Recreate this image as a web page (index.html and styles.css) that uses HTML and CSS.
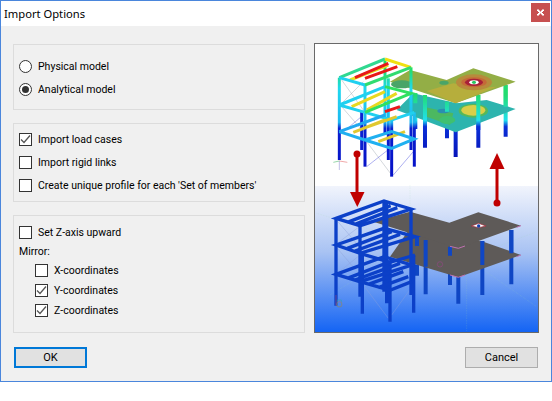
FILE: index.html
```html
<!DOCTYPE html>
<html lang="en">
<head>
  <meta charset="UTF-8">
  <title>Import Options</title>
  <link rel="stylesheet" href="styles.css">
</head>
<body>
  <div class="dialog">
    <div class="titlebar">
      <span class="title">Import Options</span>
      <button class="close-btn"><svg width="9" height="9" viewBox="0 0 9 9"><path d="M1 1.500h2v1h1v1h1v-1h1v-1h2v1.500h-1v1h-1v1h1v1h1v1.500h-2v-1h-1v-1h-1v1h-1v1h-2v-1.500h1v-1h1v-1h-1v-1h-1z" fill="#fff"/></svg></button>
    </div>
    <div class="content">
      <div class="options">
        <div class="group group-model">
          <label class="row"><span class="radio"></span>Physical model</label>
          <label class="row"><span class="radio checked"></span>Analytical model</label>
        </div>
        <div class="group group-import">
          <label class="row"><span class="check checked"><svg width="11" height="11" viewBox="0 0 11 11"><path d="M1 5.500l3 3 6-7" fill="none" stroke="#555" stroke-width="1.300"/></svg></span>Import load cases</label>
          <label class="row"><span class="check"></span>Import rigid links</label>
          <label class="row"><span class="check"></span>Create unique profile for each 'Set of members'</label>
        </div>
        <div class="group group-axis">
          <label class="row"><span class="check"></span>Set Z-axis upward</label>
          <div class="mirror-label">Mirror:</div>
          <label class="row sub"><span class="check"></span>X-coordinates</label>
          <label class="row sub"><span class="check checked"><svg width="11" height="11" viewBox="0 0 11 11"><path d="M1 5.500l3 3 6-7" fill="none" stroke="#555" stroke-width="1.300"/></svg></span>Y-coordinates</label>
          <label class="row sub"><span class="check checked"><svg width="11" height="11" viewBox="0 0 11 11"><path d="M1 5.500l3 3 6-7" fill="none" stroke="#555" stroke-width="1.300"/></svg></span>Z-coordinates</label>
        </div>
      </div>

      <div class="preview">
        <svg class="preview-art" width="223" height="288" viewBox="315 44 223 288">
          <defs>
            <linearGradient id="sky" x1="0" y1="0" x2="0" y2="1">
              <stop offset="0" stop-color="#f1f4fc"/>
              <stop offset="0.45" stop-color="#a9c3f3"/>
              <stop offset="1" stop-color="#1464f4"/>
            </linearGradient>
            <linearGradient id="col" gradientUnits="userSpaceOnUse" x1="0" y1="100" x2="0" y2="400">
              <stop offset="0" stop-color="#22e060"/>
              <stop offset="0.2" stop-color="#20d8ee"/>
              <stop offset="0.54" stop-color="#1cb8f0"/>
              <stop offset="0.6" stop-color="#0a20d0"/>
              <stop offset="1" stop-color="#0612c8"/>
            </linearGradient>
            <linearGradient id="colb" gradientUnits="userSpaceOnUse" x1="0" y1="180" x2="0" y2="370">
              <stop offset="0" stop-color="#22dc70"/>
              <stop offset="0.4" stop-color="#20e0ee"/>
              <stop offset="0.5" stop-color="#0a30d8"/>
              <stop offset="1" stop-color="#0612b8"/>
            </linearGradient>
          </defs>

          <rect x="315" y="44" width="223" height="142" fill="#fff"/>
          <rect x="315" y="186" width="223" height="146" fill="url(#sky)"/>

          <!-- coloured model, drawn in 3x units -->
          <g transform="translate(310 35) scale(0.3333)">
            <g stroke="url(#colb)" stroke-width="12" fill="none">
              <path d="M345 180V338M505 180V338M587 150V305M437 205V366M411 200V310M316 175V282"/>
            </g>
            <path d="M260 225L437 292L617 222L530 195L440 205L310 175Z" fill="#2db4ae"/>
            <path d="M340 215L430 235L420 270L350 245Z" fill="#4cb860"/>
            <ellipse cx="490" cy="227" rx="44" ry="21" fill="#55b85a"/>
            <ellipse cx="490" cy="226" rx="36" ry="16" fill="#d8cf48"/>
            <ellipse cx="412" cy="255" rx="24" ry="12" fill="#3fc070"/>
            <ellipse cx="400" cy="228" rx="18" ry="7" fill="#2a8fb0"/>
            <g stroke="url(#colb)" stroke-width="12" fill="none">
              <path d="M345 180V262M505 180V285M587 150V215M411 200V230M316 175V205"/>
            </g>
            <path d="M240 140L300 105L410 135L490 100L617 140L437 205Z" fill="#93ae46"/>
            <path d="M350 168L430 145L500 160L560 155L437 205Z" fill="#b6ae3c"/>
            <ellipse cx="275" cy="148" rx="32" ry="12" fill="#4aa468"/>
            <ellipse cx="402" cy="143" rx="14" ry="6" fill="#4aa468"/>
            <ellipse cx="492" cy="142" rx="54" ry="24" fill="#b88a3c"/>
            <ellipse cx="492" cy="142" rx="38" ry="15" fill="#c46a38"/>
            <ellipse cx="492" cy="142" rx="27" ry="11" fill="#a82038"/>
            <ellipse cx="492" cy="142" rx="14" ry="6" fill="#fff"/>
            <ellipse cx="492" cy="142" rx="6" ry="5" fill="#28c860"/>

            <g fill="none" stroke="#a8b0b8" stroke-width="1.500">
              <path d="M95 135L160 225M160 140L95 205M95 215L160 290M170 320L245 420"/>
            </g>
            <g fill="none" stroke="#5a60e0" stroke-width="1.500">
              <path d="M95 295L160 240M170 395L240 340M250 420L310 350"/>
            </g>

            <g fill="none" stroke-width="9">
              <path d="M155 230V345" stroke="#0a20d0"/>
              <path d="M235 130V375" stroke="url(#col)"/>
              <path d="M303 97V345" stroke="url(#col)"/>
              <path d="M225 72V300" stroke="url(#col)"/>
              <path d="M88 128V375" stroke="url(#col)"/>
              <path d="M165 150V395" stroke="url(#col)"/>
              <path d="M313 232V395" stroke="url(#col)"/>
              <path d="M245 255V425" stroke="url(#col)"/>

              <path d="M120 135L235 90" stroke="#e8e020"/>
              <path d="M135 128L235 85M165 130L262 95" stroke="#e81818"/>
              <path d="M88 128L225 72" stroke="#30d890"/>
              <path d="M225 72L303 97" stroke="#f0e010"/>
              <path d="M88 128L165 150" stroke="#20d0f0"/>
              <path d="M165 150L303 97" stroke="#30dc70"/>

              <path d="M125 215L225 170M170 225L260 175" stroke="#e8d820"/>
              <path d="M225 230L270 215" stroke="#e81818"/>
              <path d="M88 210L225 155" stroke="#20d0f0"/>
              <path d="M88 210L165 232L245 255L313 232" stroke="#20d0f0"/>
              <path d="M165 232L303 175L225 155" stroke="#30e060"/>

              <path d="M130 292L225 255M175 275L260 245M205 320L285 290" stroke="#e0c830"/>
              <path d="M88 290L225 240" stroke="#20a8f0"/>
              <path d="M88 290L165 315L245 340L313 312L245 290L165 315" stroke="#20b0f0"/>
            </g>

            <g fill="none" stroke-width="1.500">
              <path d="M88 378L70 382" stroke="#30b050"/>
              <path d="M88 378L112 382" stroke="#e05050"/>
              <path d="M88 378V405" stroke="#8080d0"/>
            </g>
          </g>

          <!-- plain model, 3x units -->
          <g transform="translate(310 185) scale(0.3333)">
            <g fill="none" stroke="#a0d8b0" stroke-width="1" stroke-dasharray="2 3" opacity="0.7">
              <path d="M20 85L470 220L680 140M470 220V440M300 0V120M60 330L240 220M470 220L680 365"/>
            </g>
            <g stroke="#0f46c4" stroke-width="12" fill="none">
              <path d="M347 165V328M445 190V356M517 168V330M604 135V298M420 185V300M321 240V272"/>
            </g>
            <path d="M240 215L445 277L633 210L520 170L300 130Z" fill="#5e5a58"/>
            <g stroke="#0f46c4" stroke-width="12" fill="none">
              <path d="M347 165V245M517 168V240M604 135V205M420 185V212M321 155V183"/>
            </g>
            <path d="M190 110L300 80L418 113L505 82L633 122L445 190Z" fill="#5e5a58"/>
            <path d="M420 184L445 190L465 183M620 127L633 122M420 270L445 277L465 270M620 215L633 210" fill="none" stroke="#c070b0" stroke-width="3"/>
            <path d="M484 123L506 115L528 123L506 128Z" fill="#fff" stroke="#a02030" stroke-width="2"/>
            <circle cx="506" cy="123" r="5" fill="#1040b0"/>
            <circle cx="390" cy="238" r="8" fill="none" stroke="#a04090" stroke-width="1.500"/>

            <g fill="none" stroke="#8aa0d8" stroke-width="1.200">
              <path d="M82 108L148 185M148 125L82 175M82 190L150 270M150 210L82 265M160 300L235 400M310 300L245 390"/>
            </g>
            <g fill="none" stroke="#0c40c8" stroke-width="10">
              <path d="M78 100V362M150 122V335M157 205V386M230 48V355M240 230V410M303 72V330M311 210V383M222 48V320"/>
              <path d="M78 100L222 48L303 72L150 122ZM112 112L242 62M135 118L262 68"/>
              <path d="M78 180L222 130L315 155L150 205ZM112 190L245 140M135 198L270 148"/>
              <path d="M150 205L240 232L315 210"/>
              <path d="M78 268L222 215L305 240L150 290ZM112 280L245 228M135 285L270 235"/>
              <path d="M150 290L240 316L305 290M175 298L280 260M205 308L295 275"/>
            </g>
            <g fill="none" stroke-width="1.500">
              <path d="M82 345h12v20h-12z" stroke="#30a8a0"/>
              <path d="M78 330V362" stroke="#c05060"/>
              <circle cx="88" cy="358" r="8" stroke="#c07060"/>
            </g>
          </g>

          <!-- arrows -->
          <g fill="#c00000" stroke="none">
            <path d="M355.500 154h3v38h-3z"/>
            <circle cx="357" cy="154" r="3.500"/>
            <path d="M350 192h14.500l-7.200 15z"/>
            <path d="M495.500 168h3v35h-3z"/>
            <circle cx="497" cy="203" r="3.500"/>
            <path d="M489.500 169h15l-7.500-16z"/>
          </g>
        </svg>
      </div>
    </div>
    <div class="footer">
      <button class="btn btn-default">OK</button>
      <button class="btn">Cancel</button>
    </div>
  </div>
</body>
</html>
```

FILE: styles.css
```css
* { box-sizing: border-box; }
body {
  margin: 0;
  background: #fff;
  font-family: Roboto, 'Liberation Sans', sans-serif;
  font-size: 10.5px;
  color: #000;
}
.dialog {
  width: 552px;
  height: 382px;
  border: 1px solid #4a86dc;
  background: #f0f0f0;
  display: flex;
  flex-direction: column;
}
.titlebar {
  height: 25px;
  background: #fff;
  display: flex;
  justify-content: space-between;
  padding: 2px 1px 0 3px;
}
.title {
  font-family: 'Noto Sans', sans-serif;
  font-size: 11.2px;
  line-height: 21px;
}
.close-btn {
  width: 19px;
  height: 19px;
  padding: 0;
  border: none;
  background: #c75050;
  display: flex;
  align-items: center;
  justify-content: center;
}
.content {
  display: flex;
  gap: 9px;
  padding: 17px 12px 0 12px;
}
.options {
  width: 292px;
  margin-top: 1px;
  display: flex;
  flex-direction: column;
  gap: 13px;
}
.group {
  border: 1px solid #dcdcdc;
  padding: 0 5px;
}
.group-model {
  height: 66px;
  padding-top: 10px;
}
.group-import {
  height: 79px;
  padding-top: 4px;
}
.group-axis {
  height: 118px;
  padding-top: 5px;
}
.row {
  display: flex;
  align-items: center;
  gap: 6px;
  height: 23px;
}
.sub {
  height: 20px;
  margin-left: 16px;
}
.mirror-label {
  height: 16px;
  line-height: 16px;
}
.check {
  width: 13px;
  height: 13px;
  border: 1px solid #333;
  background: #fff;
  flex: none;
  display: flex;
}
.radio {
  width: 13px;
  height: 13px;
  border: 1px solid #333;
  border-radius: 50%;
  background: #fff;
  flex: none;
  display: flex;
  align-items: center;
  justify-content: center;
}
.radio.checked::after {
  content: '';
  width: 7px;
  height: 7px;
  border-radius: 50%;
  background: #333;
}
.preview {
  width: 225px;
  height: 290px;
  border: 1px solid #696969;
  flex: none;
  overflow: hidden;
}
.preview-art {
  display: block;
  filter: blur(0.35px);
}
.footer {
  display: flex;
  justify-content: space-between;
  padding: 14px 13px 0 13px;
}
.btn {
  width: 73px;
  height: 21px;
  padding: 0;
  border: 1px solid #adadad;
  background: #e1e1e1;
  font: inherit;
  font-size: 11px;
  color: #000;
}
.btn-default {
  border: 2px solid #0078d7;
}
```
